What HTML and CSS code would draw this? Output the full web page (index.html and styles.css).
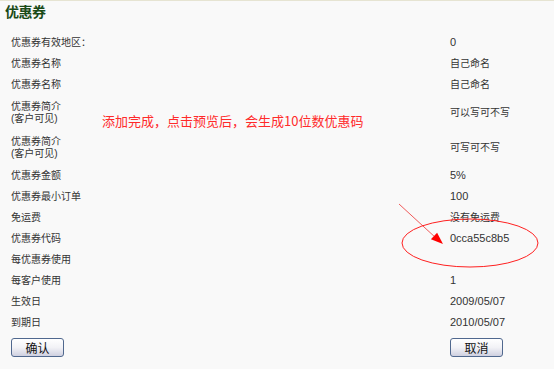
FILE: index.html
```html
<!DOCTYPE html>
<html lang="zh-CN">
<head>
    <meta charset="UTF-8">
    <title>优惠券</title>
    <link rel="stylesheet" href="styles.css">
</head>
<body>
    <div class="page">
        <h1>优惠券</h1>

        <div class="form">
            <div class="row"><div>优惠券有效地区：</div><div class="num">0</div></div>
            <div class="row"><div>优惠券名称</div><div>自己命名</div></div>
            <div class="row"><div>优惠券名称</div><div>自己命名</div></div>
            <div class="row tall"><div>优惠券简介<br>(客户可见)</div><div>可以写可不写</div></div>
            <div class="row tall"><div>优惠券简介<br>(客户可见)</div><div>可写可不写</div></div>
            <div class="row"><div>优惠券金额</div><div class="num">5%</div></div>
            <div class="row"><div>优惠券最小订单</div><div class="num">100</div></div>
            <div class="row"><div>免运费</div><div>没有免运费</div></div>
            <div class="row"><div>优惠券代码</div><div class="num">0cca55c8b5</div></div>
            <div class="row"><div>每优惠券使用</div><div></div></div>
            <div class="row"><div>每客户使用</div><div class="num">1</div></div>
            <div class="row"><div>生效日</div><div class="num">2009/05/07</div></div>
            <div class="row"><div>到期日</div><div class="num">2010/05/07</div></div>
            <div class="row buttons">
                <div><button>确认</button></div>
                <div><button>取消</button></div>
            </div>
        </div>

        <!-- annotation layer -->
        <p class="note">添加完成，点击预览后，会生成10位数优惠码</p>
        <svg class="marks" width="554" height="369" viewBox="0 0 554 369">
            <line x1="399" y1="203" x2="436" y2="237" stroke="#f05a5a" stroke-width="1"/>
            <polygon points="443,243 430.9,238.3 437.1,231.7" fill="#ff0000"/>
            <ellipse cx="470" cy="242" rx="68" ry="24" fill="none" stroke="#ff2020" stroke-width="1"/>
        </svg>
    </div>
</body>
</html>
```

FILE: styles.css
```css
html, body {
    margin: 0;
    padding: 0;
    background-color: #f9f9f9;
}

.page {
    position: relative;
    width: 554px;
    height: 369px;
    border-top: 1px solid #e6e4d2;
    box-sizing: border-box;
    font-family: "Liberation Sans", "Noto Sans CJK SC", sans-serif;
    color: #333;
    overflow: hidden;
}

h1 {
    margin: 0;
    padding: 1px 0 0 5px;
    height: 30px;
    font-size: 14px;
    line-height: 20px;
    font-weight: bold;
    color: #1a4a17;
    letter-spacing: -0.5px;
}

.form {
    padding-left: 11px;
}

.row {
    display: grid;
    grid-template-columns: 439px 1fr;
    align-items: center;
    padding: 4px 0;
    font-size: 10px;
    line-height: 13px;
    min-height: 13px;
}

.row.tall {
    line-height: 12px;
    padding: 5.5px 0;
}

.num {
    font-size: 11px;
}

.buttons {
    padding: 5px 0 0;
}

button {
    width: 53px;
    height: 19px;
    padding: 0;
    border: 1px solid #50688e;
    border-radius: 3px;
    background: linear-gradient(#ffffff, #f2f2f6 50%, #cfd0e0);
    font-family: "Noto Sans CJK SC", sans-serif;
    font-size: 12px;
    line-height: 16px;
    color: #111;
    cursor: pointer;
}

.note {
    position: absolute;
    left: 102px;
    top: 111px;
    margin: 0;
    font-family: "Noto Sans CJK SC", sans-serif;
    font-size: 13px;
    line-height: 17px;
    color: #ff2a2a;
    letter-spacing: 0;
}

.marks {
    position: absolute;
    left: 0;
    top: 0;
    pointer-events: none;
}
```
